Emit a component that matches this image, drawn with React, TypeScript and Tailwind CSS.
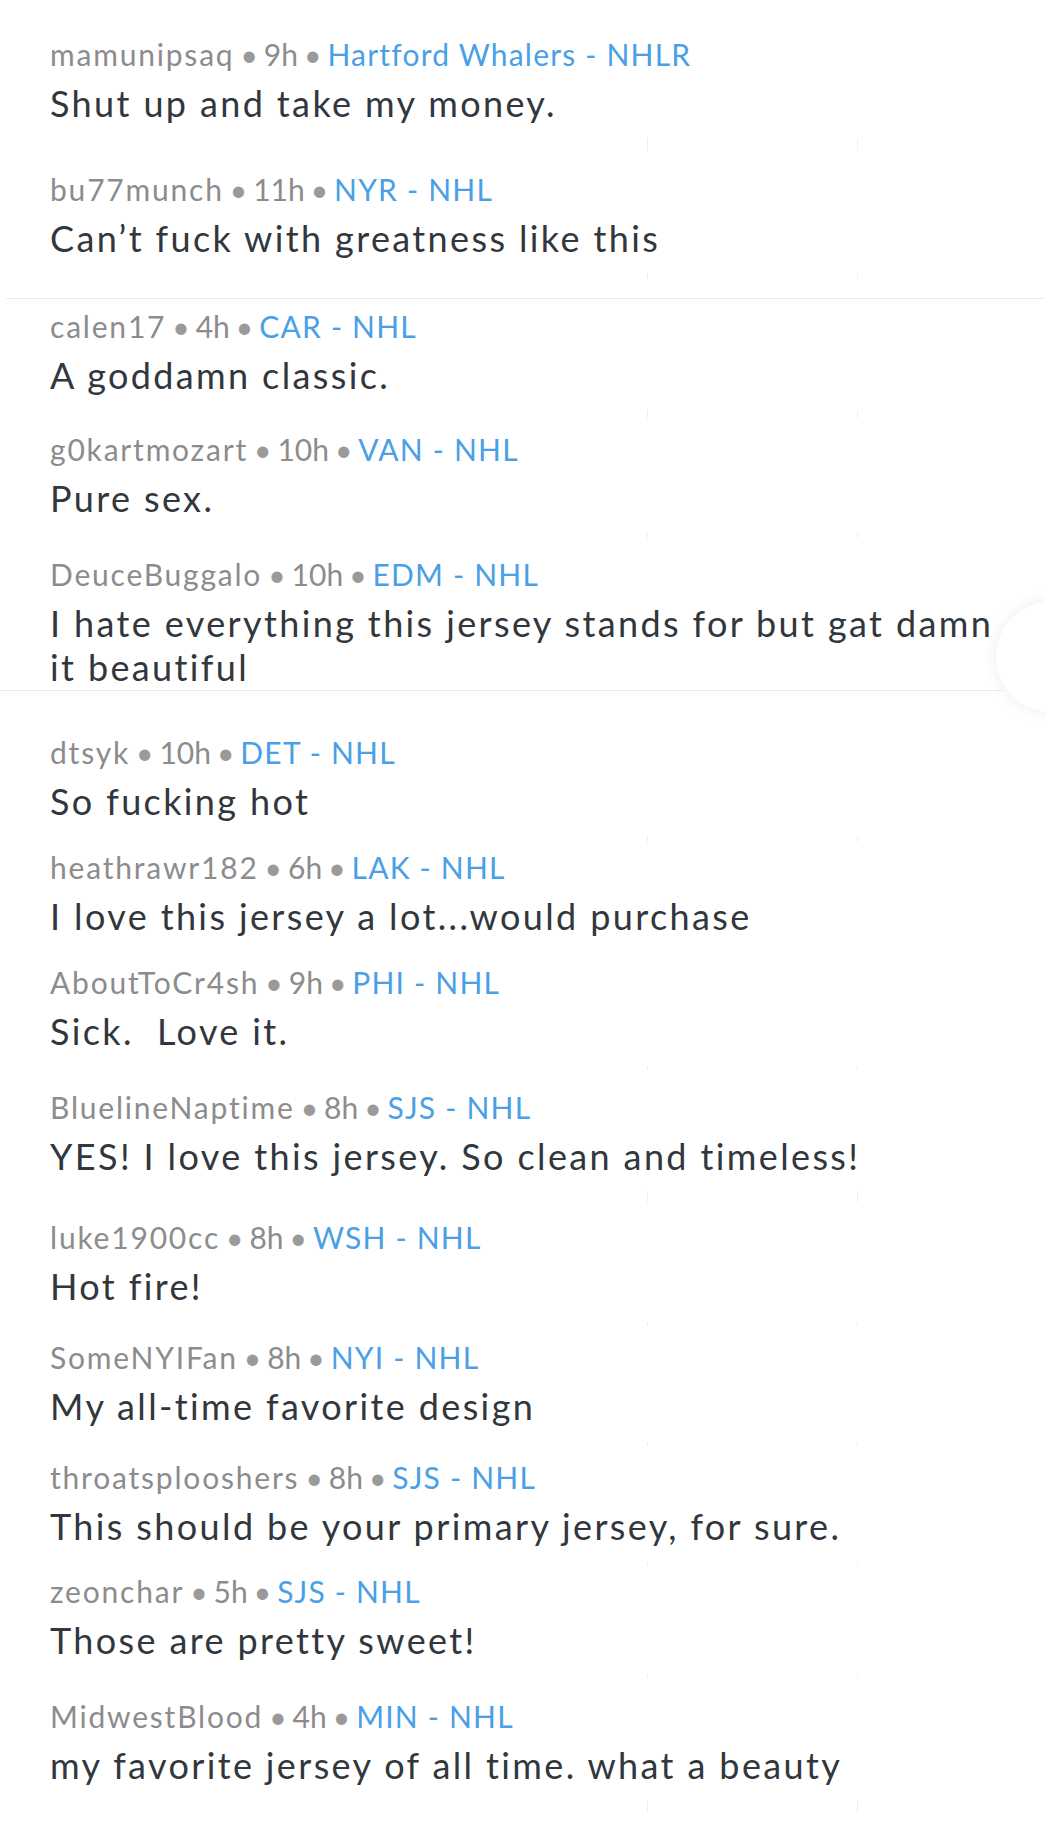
import { Fragment } from "react";

type Comment = {
  user: string;
  age: string;
  flair: string;
  body: string;
  mt: string;
  divider?: "wide" | "short";
  ticks?: string;
};

const comments: Comment[] = [
  { user: "mamunipsaq", age: "9h", flair: "Hartford Whalers - NHLR", body: "Shut up and take my money.", mt: "mt-[36px]", ticks: "h-[13px]" },
  { user: "bu77munch", age: "11h", flair: "NYR - NHL", body: "Can\u2019t fuck with greatness like this", mt: "mt-[46px]", ticks: "h-[6px]" },
  { user: "calen17", age: "4h", flair: "CAR - NHL", body: "A goddamn classic.", mt: "mt-[9px]", divider: "wide", ticks: "h-[8px]" },
  { user: "g0kartmozart", age: "10h", flair: "VAN - NHL", body: "Pure sex.", mt: "mt-[34px]", ticks: "h-[5px]" },
  { user: "DeuceBuggalo", age: "10h", flair: "EDM - NHL", body: "I hate everything this jersey stands for but gat damn\nit beautiful", mt: "mt-[36px]" },
  { user: "dtsyk", age: "10h", flair: "DET - NHL", body: "So fucking hot", mt: "mt-[43px]", divider: "short", ticks: "h-[6px]" },
  { user: "heathrawr182", age: "6h", flair: "LAK - NHL", body: "I love this jersey a lot...would purchase", mt: "mt-[26px]" },
  { user: "AboutToCr4sh", age: "9h", flair: "PHI - NHL", body: "Sick.  Love it.", mt: "mt-[26px]", ticks: "h-[5px]" },
  { user: "BluelineNaptime", age: "8h", flair: "SJS - NHL", body: "YES! I love this jersey. So clean and timeless!", mt: "mt-[36px]", ticks: "h-[11px]" },
  { user: "luke1900cc", age: "8h", flair: "WSH - NHL", body: "Hot fire!", mt: "mt-[41px]", ticks: "h-[5px]" },
  { user: "SomeNYIFan", age: "8h", flair: "NYI - NHL", body: "My all-time favorite design", mt: "mt-[31px]", ticks: "h-[5px]" },
  { user: "throatsplooshers", age: "8h", flair: "SJS - NHL", body: "This should be your primary jersey, for sure.", mt: "mt-[31px]", ticks: "h-[4px]" },
  { user: "zeonchar", age: "5h", flair: "SJS - NHL", body: "Those are pretty sweet!", mt: "mt-[25px]", ticks: "h-[4px]" },
  { user: "MidwestBlood", age: "4h", flair: "MIN - NHL", body: "my favorite jersey of all time. what a beauty", mt: "mt-[36px]", ticks: "h-[13px]" },
];

function Dot() {
  return <span className="mx-[6px] tracking-normal text-[#9a9a9a]">•</span>;
}

function CommentRow({ c }: { c: Comment }) {
  return (
    <div className={`relative flex flex-col gap-[9px] pl-[50px] ${c.mt}`}>
      <div className="whitespace-nowrap text-[30px] leading-[36px] tracking-[0.06em] text-[#8c8c8c]">
        {c.user}
        <Dot />
        <span className="tracking-normal">{c.age}</span>
        <Dot />
        <span className="tracking-[0.04em] text-[#4a9fe6]">{c.flair}</span>
      </div>
      <div className="whitespace-pre-wrap text-[36px] leading-[44px] tracking-[0.066em] text-[#31373c]">
        {c.body}
      </div>
      {c.ticks && (
        <>
          <div className={`absolute left-[647px] top-[calc(100%+13px)] w-px bg-[#efefef] ${c.ticks}`} />
          <div className={`absolute left-[857px] top-[calc(100%+13px)] w-px bg-[#efefef] ${c.ticks}`} />
        </>
      )}
    </div>
  );
}

export default function App() {
  return (
    <div className="relative flex min-h-screen flex-col overflow-hidden bg-white font-['Lato',sans-serif]">
      {comments.map((c) => (
        <Fragment key={c.user}>
          {c.divider === "wide" && <div className="ml-[6px] mt-[38px] h-px bg-[#ececec]" />}
          {c.divider === "short" && <div className="mt-px h-px w-[1002px] bg-[#ececec]" />}
          <CommentRow c={c} />
        </Fragment>
      ))}
      <div className="absolute left-[996px] top-[602px] h-[110px] w-[110px] rounded-full bg-white shadow-[0_0_16px_rgba(0,0,0,0.07)]" />
    </div>
  );
}
